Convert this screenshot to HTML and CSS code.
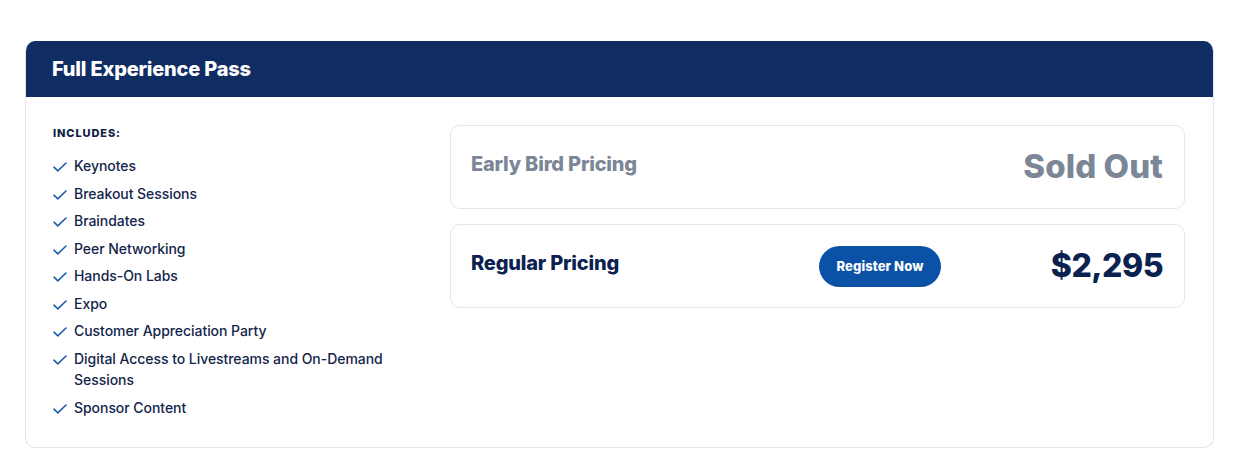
FILE: index.html
```html
<!DOCTYPE html>
<html lang="en">
<head>
<meta charset="utf-8">
<title>Full Experience Pass</title>
<link rel="stylesheet" href="styles.css">
</head>
<body>
<div class="page">
  <section class="card">
    <header class="card-header">
      <h2 class="card-title">Full Experience Pass</h2>
    </header>
    <div class="card-body">
      <div class="includes">
        <h3 class="includes-title">INCLUDES:</h3>
        <ul class="features">
          <li><svg class="check" viewBox="0 0 14 10" aria-hidden="true"><path d="M1 5.2 L4.8 8.8 L13 1"/></svg><span>Keynotes</span></li>
          <li><svg class="check" viewBox="0 0 14 10" aria-hidden="true"><path d="M1 5.2 L4.8 8.8 L13 1"/></svg><span>Breakout Sessions</span></li>
          <li><svg class="check" viewBox="0 0 14 10" aria-hidden="true"><path d="M1 5.2 L4.8 8.8 L13 1"/></svg><span>Braindates</span></li>
          <li><svg class="check" viewBox="0 0 14 10" aria-hidden="true"><path d="M1 5.2 L4.8 8.8 L13 1"/></svg><span>Peer Networking</span></li>
          <li><svg class="check" viewBox="0 0 14 10" aria-hidden="true"><path d="M1 5.2 L4.8 8.8 L13 1"/></svg><span>Hands-On Labs</span></li>
          <li><svg class="check" viewBox="0 0 14 10" aria-hidden="true"><path d="M1 5.2 L4.8 8.8 L13 1"/></svg><span>Expo</span></li>
          <li><svg class="check" viewBox="0 0 14 10" aria-hidden="true"><path d="M1 5.2 L4.8 8.8 L13 1"/></svg><span>Customer Appreciation Party</span></li>
          <li><svg class="check" viewBox="0 0 14 10" aria-hidden="true"><path d="M1 5.2 L4.8 8.8 L13 1"/></svg><span>Digital Access to Livestreams and On-Demand Sessions</span></li>
          <li><svg class="check" viewBox="0 0 14 10" aria-hidden="true"><path d="M1 5.2 L4.8 8.8 L13 1"/></svg><span>Sponsor Content</span></li>
        </ul>
      </div>
      <div class="pricing">
        <div class="price-row price-row--sold">
          <div class="price-label">Early Bird Pricing</div>
          <div class="price-value">Sold Out</div>
        </div>
        <div class="price-row">
          <div class="price-label">Regular Pricing</div>
          <a class="register-btn" href="#">Register Now</a>
          <div class="price-value price-value--amount">$2,295</div>
        </div>
      </div>
    </div>
  </section>
</div>
</body>
</html>
```

FILE: styles.css
```css
* { box-sizing: border-box; }

html, body {
  margin: 0;
  padding: 0;
  background: #ffffff;
}

body {
  font-family: Inter, "Liberation Sans", Arial, sans-serif;
  color: #0f2347;
}

.page {
  padding: 41px 24px 0 25px;
}

.card {
  border: 1px solid #e3e5e8;
  border-top: none;
  border-radius: 10px;
  overflow: hidden;
  background: #ffffff;
}

.card-header {
  background: #0f2d63;
  height: 56px;
  display: flex;
  align-items: center;
  padding: 0 26px;
}

.card-title {
  margin: 0;
  color: #ffffff;
  font-size: 20px;
  font-weight: 800;
  letter-spacing: -0.2px;
}

.card-body {
  display: flex;
  padding: 28px 28px 29px 27px;
}

.includes {
  width: 340px;
  flex: none;
}

.includes-title {
  margin: 1px 0 15px 0;
  font-size: 11px;
  line-height: 14px;
  font-weight: 800;
  letter-spacing: 0.9px;
  color: #0f2347;
}

.features {
  list-style: none;
  margin: 0;
  padding: 0;
}

.features li {
  display: flex;
  align-items: flex-start;
  font-size: 14px;
  line-height: 21.5px;
  font-weight: 500;
  letter-spacing: -0.05px;
  color: #13254a;
  margin-bottom: 6px;
}

.features li:last-child { margin-bottom: 0; }

.check {
  flex: none;
  width: 14px;
  height: 10px;
  margin: 7px 7px 0 0;
  fill: none;
  stroke: #1c5ea9;
  stroke-width: 1.6;
  stroke-linecap: round;
  stroke-linejoin: round;
}

.pricing {
  flex: 1;
  margin-left: 57px;
  display: flex;
  flex-direction: column;
  gap: 15px;
}

.price-row {
  height: 84px;
  border: 1px solid #e3e5e8;
  border-radius: 10px;
  display: flex;
  align-items: center;
  padding: 0 21px 0 20px;
}

.price-label {
  flex: 1;
  font-size: 20px;
  font-weight: 800;
  letter-spacing: -0.2px;
  color: #0b2250;
  margin-top: -6px;
}

.price-value {
  font-size: 33px;
  font-weight: 800;
  letter-spacing: 0.1px;
  color: #0b2250;
  text-align: right;
}

.price-row--sold .price-label,
.price-row--sold .price-value {
  color: #7b8797;
}

.price-row--sold .price-value { margin-top: -2px; }

.price-value--amount {
  width: 222px;
  margin-top: -2px;
  font-size: 32px;
  letter-spacing: -0.5px;
}

.register-btn {
  display: inline-flex;
  align-items: center;
  justify-content: center;
  width: 122px;
  height: 41px;
  border-radius: 21px;
  background: #0b52a7;
  color: #ffffff;
  font-size: 13px;
  font-weight: 800;
  letter-spacing: 0.1px;
  text-decoration: none;
}
```
